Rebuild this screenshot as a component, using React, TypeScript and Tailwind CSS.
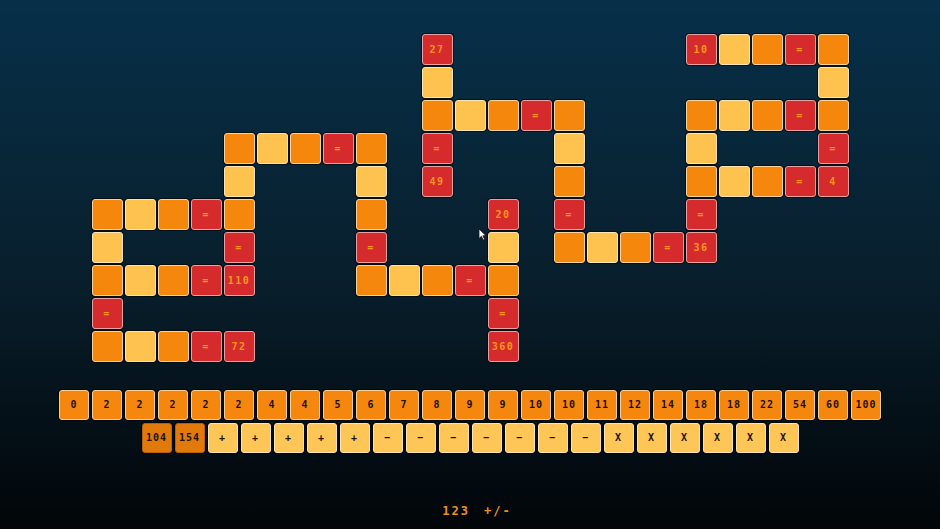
const BOARD = [
  ". . . . . . . . . . 27 . . . . . . . 10 Y O = O",
  ". . . . . . . . . . Y . . . . . . . . . . . Y",
  ". . . . . . . . . . O Y O = O . . . O Y O = O",
  ". . . . O Y O = O . = . . . Y . . . Y . . . =",
  ". . . . Y . . . Y . 49 . . . O . . . O Y O = 4",
  "O Y O = O . . . O . . . 20 . = . . . = . . . .",
  "Y . . . = . . . = . . . Y . O Y O = 36 . . . .",
  "O Y O = 110 . . . O Y O = O . . . . . . . . . .",
  "= . . . . . . . . . . . = . . . . . . . . . .",
  "O Y O = 72 . . . . . . . 360 . . . . . . . . . .",
];

const NUMBERS = ["0", "2", "2", "2", "2", "2", "4", "4", "5", "6", "7", "8", "9", "9", "10", "10", "11", "12", "14", "18", "18", "22", "54", "60", "100"];
const PICKED = ["104", "154"];
const OPS = ["+", "+", "+", "+", "+", "−", "−", "−", "−", "−", "−", "−", "X", "X", "X", "X", "X", "X"];

const font = "font-['DejaVu_Sans_Mono',monospace] font-bold";

function BoardCell({ token }: { token: string }) {
  if (token === ".") return <div className="h-[31px] w-[31px]" />;
  if (token === "O")
    return <div className="h-[31px] w-[31px] rounded-[3px] border border-[#fcd49a] bg-[#f6870d] shadow-[0_0_0_1px_rgba(0,0,0,0.55)]" />;
  if (token === "Y")
    return <div className="h-[31px] w-[31px] rounded-[3px] border border-[#ffe6b0] bg-[#fec24f] shadow-[0_0_0_1px_rgba(0,0,0,0.55)]" />;
  return (
    <div
      className={`flex h-[31px] w-[31px] items-center justify-center rounded-[3px] border border-[#e9a1a1] bg-[#d62b2d] text-[10px] leading-none tracking-[1.5px] text-[#f8961c] shadow-[0_0_0_1px_rgba(0,0,0,0.55)] ${font}`}
    >
      {token}
    </div>
  );
}

function TrayTile({ label, tone }: { label: string; tone: "orange" | "dark" | "yellow" }) {
  const colors =
    tone === "orange"
      ? "bg-[#f6870e] border-[#fbcf94]"
      : tone === "dark"
        ? "bg-[#e27a0b] border-[#b9600a]"
        : "bg-[#fec657] border-[#ffe4ae]";
  return (
    <div
      className={`flex h-[30px] w-[30px] items-center justify-center rounded-[3px] border text-[10px] leading-none tracking-[1px] text-[#1d1105] shadow-[0_0_0_1px_rgba(0,0,0,0.6)] ${colors} ${font}`}
    >
      {label}
    </div>
  );
}

export default function App() {
  return (
    <div className="relative flex h-[529px] w-full flex-col items-center overflow-hidden bg-linear-to-b from-[#063049] via-[#081e2b] via-55% to-[#020609] pt-[34px]">
      <div className="grid grid-cols-[repeat(23,31px)] gap-[2px]">
        {BOARD.flatMap((row, r) =>
          row.split(" ").map((token, c) => <BoardCell key={`${r}-${c}`} token={token} />)
        )}
      </div>

      <div className="mt-[28px] flex flex-col items-center gap-[3px]">
        <div className="flex gap-[3px]">
          {NUMBERS.map((n, i) => (
            <TrayTile key={i} label={n} tone="orange" />
          ))}
        </div>
        <div className="flex gap-[3px]">
          {PICKED.map((n, i) => (
            <TrayTile key={i} label={n} tone="dark" />
          ))}
          {OPS.map((op, i) => (
            <TrayTile key={i} label={op} tone="yellow" />
          ))}
        </div>
      </div>

      <div className={`ml-[14px] mt-[52px] flex gap-[14px] text-[12px] leading-none tracking-[2px] text-[#f0901c] ${font}`}>
        <span>123</span>
        <span>+/-</span>
      </div>

      {/* mouse pointer */}
      <svg className="absolute left-[478px] top-[228px]" width="9" height="13" viewBox="0 0 9 13">
        <path d="M1 1 L1 10.5 L3.4 8.3 L5.2 12 L6.6 11.3 L4.9 7.7 L8 7.7 Z" fill="#ffffff" stroke="#1a1a1a" strokeWidth="0.8" />
      </svg>
    </div>
  );
}
